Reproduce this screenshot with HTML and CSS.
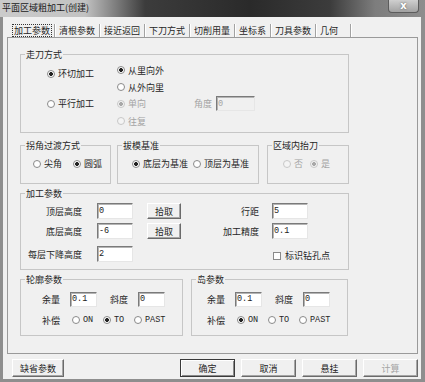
FILE: index.html
```html
<!DOCTYPE html>
<html lang="zh">
<head>
    <meta charset="UTF-8">
    <title>平面区域粗加工(创建)</title>
    <link rel="stylesheet" href="styles.css">
</head>
<body>
    <div class="window">
        <div class="titlebar">
            <span class="title">平面区域粗加工(创建)</span>
            <span class="close">x</span>
        </div>

        <div class="client">
            <div class="tabs">
                <span class="tab"><span class="tab-label focused">加工参数</span></span>
                <span class="tab"><span class="tab-label">清根参数</span></span>
                <span class="tab"><span class="tab-label">接近返回</span></span>
                <span class="tab"><span class="tab-label">下刀方式</span></span>
                <span class="tab"><span class="tab-label">切削用量</span></span>
                <span class="tab"><span class="tab-label">坐标系</span></span>
                <span class="tab"><span class="tab-label">刀具参数</span></span>
                <span class="tab tab-last"><span class="tab-label">几何</span></span>
            </div>

            <div class="panel">
                <!-- 走刀方式 -->
                <div class="group path">
                    <div class="caption">走刀方式</div>
                    <div class="path-grid">
                        <label class="opt loop"><input type="radio" name="mode" checked>环切加工</label>
                        <label class="opt in-out"><input type="radio" name="dir" checked>从里向外</label>
                        <label class="opt out-in"><input type="radio" name="dir">从外向里</label>
                        <label class="opt parallel"><input type="radio" name="mode">平行加工</label>
                        <label class="opt one-way disabled"><input type="radio" name="pass" checked disabled>单向</label>
                        <span class="angle-label disabled">角度</span>
                        <input class="num angle" value="0" disabled>
                        <label class="opt two-way disabled"><input type="radio" name="pass" disabled>往复</label>
                    </div>
                </div>

                <div class="group-row">
                    <div class="group corner">
                        <div class="caption">拐角过渡方式</div>
                        <div class="choices">
                            <label class="opt"><input type="radio" name="corner">尖角</label>
                            <label class="opt"><input type="radio" name="corner" checked>圆弧</label>
                        </div>
                    </div>
                    <div class="group draft">
                        <div class="caption">拔模基准</div>
                        <div class="choices">
                            <label class="opt"><input type="radio" name="draft" checked>底层为基准</label>
                            <label class="opt"><input type="radio" name="draft">顶层为基准</label>
                        </div>
                    </div>
                    <div class="group lift">
                        <div class="caption">区域内抬刀</div>
                        <div class="choices">
                            <label class="opt disabled"><input type="radio" name="lift" disabled>否</label>
                            <label class="opt disabled"><input type="radio" name="lift" checked disabled>是</label>
                        </div>
                    </div>
                </div>

                <!-- 加工参数 -->
                <div class="group params">
                    <div class="caption">加工参数</div>
                    <div class="params-grid">
                        <span class="field-label">顶层高度</span>
                        <input class="num" value="0">
                        <button class="btn pick">拾取</button>
                        <span class="field-label right">行距</span>
                        <input class="num" value="5">

                        <span class="field-label">底层高度</span>
                        <input class="num" value="-6">
                        <button class="btn pick">拾取</button>
                        <span class="field-label right">加工精度</span>
                        <input class="num" value="0.1">

                        <span class="field-label">每层下降高度</span>
                        <input class="num" value="2">
                        <span></span>
                        <span></span>
                        <label class="opt check"><input type="checkbox">标识钻孔点</label>
                    </div>
                </div>

                <div class="group-row bottom-row">
                    <div class="group contour">
                        <div class="caption">轮廓参数</div>
                        <div class="row-fields">
                            <span>余量</span><input class="num small" value="0.1">
                            <span>斜度</span><input class="num small" value="0">
                        </div>
                        <div class="row-comp">
                            <span class="comp-label">补偿</span>
                            <label class="opt comp"><input type="radio" name="c1"><span class="mono">ON</span></label>
                            <label class="opt comp"><input type="radio" name="c1" checked><span class="mono">TO</span></label>
                            <label class="opt comp"><input type="radio" name="c1"><span class="mono">PAST</span></label>
                        </div>
                    </div>
                    <div class="group island">
                        <div class="caption">岛参数</div>
                        <div class="row-fields">
                            <span>余量</span><input class="num small" value="0.1">
                            <span>斜度</span><input class="num small" value="0">
                        </div>
                        <div class="row-comp">
                            <span class="comp-label">补偿</span>
                            <label class="opt comp"><input type="radio" name="c2" checked><span class="mono">ON</span></label>
                            <label class="opt comp"><input type="radio" name="c2"><span class="mono">TO</span></label>
                            <label class="opt comp"><input type="radio" name="c2"><span class="mono">PAST</span></label>
                        </div>
                    </div>
                </div>
            </div>

            <div class="footer">
                <button class="btn defaults">缺省参数</button>
                <div class="actions">
                    <button class="btn default">确定</button>
                    <button class="btn">取消</button>
                    <button class="btn">悬挂</button>
                    <button class="btn" disabled>计算</button>
                </div>
            </div>
        </div>
    </div>
</body>
</html>
```

FILE: styles.css
```css
body {
    margin: 0;
    font-family: "Noto Sans CJK SC", sans-serif;
    font-size: 9px;
    color: #262626;
}

/* Window frame */
.window {
    width: 425px;
    height: 382px;
    display: flex;
    flex-direction: column;
    background: #8e8e8e;
}

.titlebar {
    height: 17px;
    flex-shrink: 0;
    display: flex;
    justify-content: space-between;
    padding: 0 6px 0 2px;
    background: linear-gradient(to right, #cbcbcb 0, #c2c2c2 85px, #8a8a8a 110px, #3c3c3c 145px, #2a2a2a 250px, #3c3c3c 330px, #7d7d7d 375px, #8e8e8e 100%);
}

.title {
    line-height: 16px;
    color: #1a1a1a;
}

.close {
    box-sizing: border-box;
    width: 31px;
    height: 13px;
    border: 1px solid #5c5c5c;
    border-top: 0;
    border-radius: 0 0 4px 4px;
    background: linear-gradient(#cfcfcf, #a2a2a2);
    color: #fff;
    font: bold 10px "DejaVu Sans", sans-serif;
    line-height: 11px;
    text-align: center;
    text-shadow: 0 0 2px #555;
}

.client {
    flex: 1;
    margin: 0 4px 3px 3px;
    padding: 7px 3px 0 4px;
    background: #f0f0f0;
}

/* Tab strip (flat buttons with separators) */
.tabs {
    display: flex;
    height: 13px;
    padding-left: 3px;
}

.tab {
    padding: 0 2px;
    border-right: 1px solid #a2a2a2;
    box-shadow: 1px 0 0 #fff;
}

.tab-last {
    padding-right: 10px;
}

.tab-label {
    display: block;
    padding: 0 1px;
    border: 1px solid transparent;
    line-height: 11px;
    white-space: nowrap;
}

.tab-label.focused {
    border: 1px dotted #333;
}

.panel {
    box-sizing: border-box;
    width: 411px;
    height: 317px;
    border: 1px solid #9a9a9a;
    padding: 16px 0 0 12px;
}

/* Group boxes */
.group {
    box-sizing: border-box;
    border: 1px solid #c6c6c6;
}

.caption {
    width: max-content;
    margin: -6px 0 0 4px;
    padding: 0 1px;
    background: #f0f0f0;
    line-height: 11px;
}

.group-row {
    display: flex;
    margin-top: 12px;
}

.path {
    width: 329px;
    height: 79px;
}

.path-grid {
    display: grid;
    grid-template-columns: 70px 77px 22px 39px;
    grid-template-rows: 18px 16px 17px 18px;
    align-items: center;
    margin-top: 1px;
    padding-left: 26px;
}

.loop { grid-area: 1 / 1; align-self: end; }
.in-out { grid-area: 1 / 2; }
.out-in { grid-area: 2 / 2; }
.parallel { grid-area: 3 / 1; }
.one-way { grid-area: 3 / 2; }
.angle-label { grid-area: 3 / 3; line-height: 11px; }
.two-way { grid-area: 4 / 2; }

.num.angle {
    grid-area: 3 / 4;
    width: 39px;
    height: 15px;
}

.corner {
    width: 91px;
    height: 39px;
}

.draft {
    width: 142px;
    margin-left: 6px;
}

.lift {
    width: 82px;
    margin-left: 8px;
}

.choices {
    display: flex;
    margin-top: 7px;
}

.corner .choices { padding-left: 12px; gap: 11px; }
.draft .choices { padding-left: 14px; gap: 5px; }
.lift .choices { padding-left: 15px; gap: 7px; }

.params {
    width: 329px;
    height: 77px;
    margin-top: 9px;
}

.params-grid {
    display: grid;
    grid-template-columns: 70px 50px 34px 91px 36px;
    grid-template-rows: 20px 23px 16px;
    align-items: start;
    margin-top: 4px;
    padding-left: 6px;
}

.field-label {
    padding: 3px 15px 0 0;
    line-height: 11px;
    text-align: right;
    white-space: nowrap;
}

.field-label.right {
    padding-right: 13px;
}

.opt.check {
    align-self: center;
    margin: 3px 0 0 1px;
}

.bottom-row {
    margin-top: 9px;
}

.contour {
    width: 163px;
    height: 57px;
}

.island {
    width: 157px;
    margin-left: 8px;
}

.row-fields,
.row-comp {
    display: flex;
    align-items: center;
    height: 16px;
    line-height: 11px;
}

.row-fields { margin-top: 6px; }
.row-comp { margin-top: 5px; }

.contour .row-fields,
.contour .row-comp { padding-left: 21px; }

.island .row-fields,
.island .row-comp { padding-left: 15px; }

.row-fields .num {
    margin: 0 13px 0 10px;
}

.comp-label {
    margin-right: 12px;
}

.opt.comp {
    width: 31px;
}

.mono {
    font: 8.5px "Liberation Mono", monospace;
}

/* Controls */
.opt {
    display: flex;
    align-items: center;
    line-height: 11px;
    white-space: nowrap;
}

.disabled {
    color: #a4a4a4;
}

input[type="radio"],
input[type="checkbox"] {
    appearance: none;
    box-sizing: border-box;
    flex-shrink: 0;
    width: 8px;
    height: 8px;
    margin: 0 3px 0 0;
    border: 1px solid #8a8a8a;
    background: #fff;
}

input[type="radio"] {
    border-radius: 50%;
}

input[type="radio"]:checked {
    background: radial-gradient(circle, #222 0 1.7px, #fff 2.2px);
}

input[type="radio"]:disabled {
    border-color: #c8c8c8;
    background: #f4f4f4;
}

input[type="radio"]:disabled:checked {
    background: radial-gradient(circle, #a8a8a8 0 1.7px, #f4f4f4 2.2px);
}

.opt.check input {
    margin-right: 4px;
}

.num {
    box-sizing: border-box;
    width: 36px;
    height: 16px;
    padding: 0 1px;
    border: 1px solid;
    border-color: #7a7a7a #e6e6e6 #e6e6e6 #7a7a7a;
    box-shadow: inset 1px 1px 0 #b4b4b4;
    background: #fff;
    color: #222;
    font: 8.5px "Liberation Mono", monospace;
}

.num.small {
    width: 27px;
    height: 15px;
}

.num:disabled {
    background: #f0f0f0;
    color: #a4a4a4;
}

.btn {
    box-sizing: border-box;
    height: 18px;
    padding: 0;
    border: 1px solid;
    border-color: #fff #6a6a6a #6a6a6a #fff;
    box-shadow: inset -1px -1px 0 #a6a6a6;
    background: #f0f0f0;
    color: #262626;
    font: inherit;
}

.btn.pick {
    width: 34px;
    height: 16px;
}

.btn.default {
    border-color: #3a3a3a;
    box-shadow: inset 1px 1px 0 #fff, inset -1px -1px 0 #8a8a8a;
}

.btn:disabled {
    color: #a4a4a4;
}

.footer {
    display: flex;
    justify-content: space-between;
    margin-top: 5px;
}

.defaults {
    width: 52px;
    margin-left: 5px;
}

.actions {
    display: flex;
    gap: 6px;
}

.actions .btn {
    width: 55px;
}
```
